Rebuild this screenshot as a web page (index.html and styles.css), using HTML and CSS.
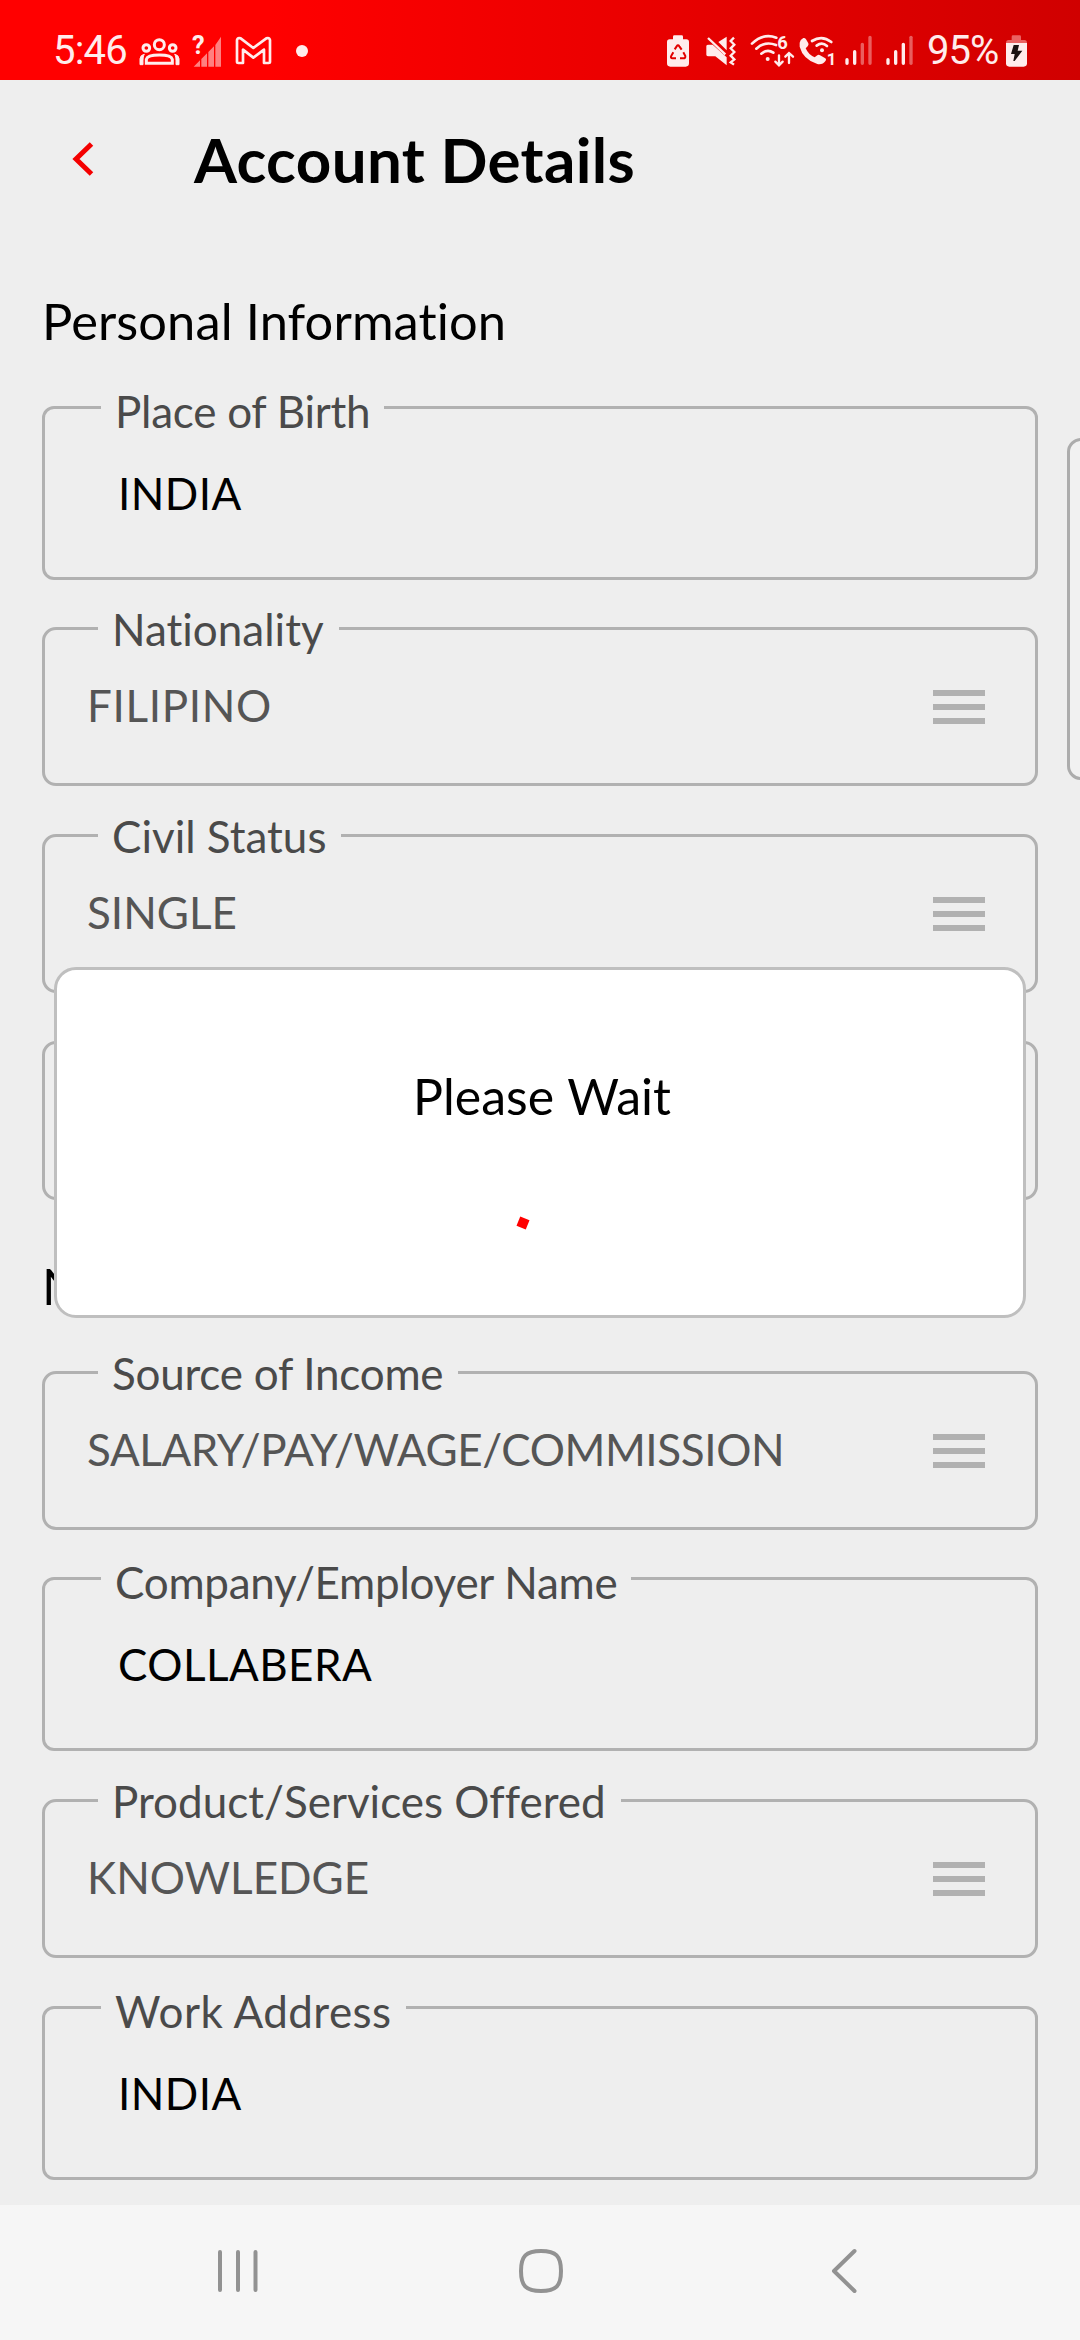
FILE: index.html
```html
<!DOCTYPE html>
<html lang="en">
<head>
<meta charset="utf-8">
<title>Account Details</title>
<link rel="stylesheet" href="styles.css">
</head>
<body>
<div class="screen">
  <header class="status">
    <div class="status-group">
      <span class="time">5:46</span>
      <svg width="60" height="60" viewBox="270 0 180 180" fill="none" stroke="#ffecec" stroke-width="9">
        <circle cx="358" cy="74" r="15"/><circle cx="319" cy="84" r="10"/><circle cx="398" cy="84" r="10"/>
        <path d="M319 130V118Q322 105 358 105T397 118V130Z"/>
        <path d="M300 134V116Q301 105 313 103Q308 109 309 134ZM417 134V116Q416 105 404 103Q409 109 408 134Z" fill="#ffecec" stroke-width="3"/>
      </svg>
      <svg width="40" height="60" viewBox="450 0 120 180">
        <path d="M461 140L480 121V140ZM484 117L501 100V140H484ZM505 96L522 79V140H505ZM526 75L543 50V140H526Z" fill="#ff8080"/>
        <text class="glyph-bold" x="456" y="102" font-size="76">?</text>
      </svg>
      <svg width="50" height="60" viewBox="570 0 150 180" fill="none" stroke="#ffecec" stroke-width="8" stroke-linejoin="round">
        <path d="M591 127V60Q593 52 602 55L640 84L679 55Q688 52 690 60V127Q690 129 686 129H672V89L640 113L609 89V129H595Q591 129 591 127Z"/>
      </svg>
      <svg width="40" height="60" viewBox="720 0 120 180"><circle cx="786" cy="93" r="18" fill="#ffecec"/></svg>
    </div>
    <div class="status-group">
      <svg width="47" height="60" viewBox="0 0 141 180">
        <path d="M69 58V50Q69 46 73 46H95Q99 46 99 50V58H109Q117 58 117 66V130Q117 140 107 140H61Q51 140 51 130V66Q51 58 59 58Z" fill="#ffecec"/>
        <path d="M74 88L80 79Q84 73 88 79L95 89M100 97L106 108Q107 115 100 115H90M78 115H68Q60 114 64 107L70 97" fill="none" stroke="#e20000" stroke-width="6"/>
      </svg>
      <svg width="47" height="60" viewBox="141 0 141 180">
        <path d="M169 78Q169 74 176 74H188L230 112V136L196 109H176Q169 109 169 104ZM205 66L230 50V91Z" fill="#ffecec"/>
        <path d="M174 54L226 103" stroke="#ffecec" stroke-width="7"/>
        <path d="M252 53L242 63L253 74L242 85L253 96L242 107L253 118L242 127L252 134" fill="none" stroke="#ffecec" stroke-width="7"/>
      </svg>
      <svg width="51" height="60" viewBox="282 0 153 180" fill="none" stroke="#ffecec" stroke-width="8" stroke-linecap="round">
        <path d="M306 71Q340 38 379 53M319 86Q345 62 378 75M334 101Q352 86 370 98"/>
        <circle cx="353" cy="117" r="6" fill="#ffecec" stroke="none"/>
        <path d="M387 106V135M376 125L387 136L398 125M417 129V100M406 110L417 99L429 110" stroke-width="7"/>
        <text class="glyph-bold" x="382" y="87" font-size="55" stroke="none">6</text>
      </svg>
      <svg width="44" height="60" viewBox="435 0 132 180" fill="none" stroke="#ffecec" stroke-width="7" stroke-linecap="round">
        <path d="M449 68Q450 59 460 54Q465 53 468 58L475 70Q477 74 473 79L467 85Q475 104 494 112L502 106Q506 103 510 106L526 115Q530 118 527 122Q518 135 502 132Q459 118 449 80Z" fill="#ffecec" stroke="none"/>
        <path d="M486 63Q516 44 544 66M500 77Q516 65 531 78" stroke-width="8"/>
        <circle cx="516" cy="91" r="6" fill="#ffecec" stroke="none"/>
        <text class="glyph-bold" x="530" y="134" font-size="50" stroke="none">1</text>
      </svg>
      <svg width="41" height="60" viewBox="567 0 123 180" stroke="#ffecec" stroke-width="10" stroke-linecap="round">
        <path d="M591 119V130M614 95V130"/><path d="M637 73V130M660 52V130" opacity=".4"/>
      </svg>
      <svg width="40" height="60" viewBox="690 0 120 180" stroke="#ffecec" stroke-width="10" stroke-linecap="round">
        <path d="M714 119V130M737 95V130M760 73V130"/><path d="M783 52V130" opacity=".4"/>
      </svg>
      <span class="battery-level">95%</span>
      <svg width="40" height="60" viewBox="1050 0 120 180">
        <path d="M1068 70Q1068 60 1076 60H1085V50Q1085 46 1089 46H1109Q1113 46 1113 50V60H1123Q1131 60 1131 70Z" fill="#ea6262"/>
        <path d="M1068 69H1131V130Q1131 140 1121 140H1078Q1068 140 1068 130Z" fill="#ffecec"/>
        <path d="M1091 75H1107L1103 92H1117L1094 123H1090L1094 102H1083Z" fill="#1c1010"/>
      </svg>
    </div>
  </header>

  <main class="page">
    <div class="title-bar">
      <svg class="back" width="24" height="36" viewBox="0 0 24 36"><path d="M20.5 3L5 18L20.5 33" fill="none" stroke="#f40000" stroke-width="5"/></svg>
      <h1 class="title">Account Details</h1>
    </div>

    <h2 class="section personal">Personal Information</h2>
    <div class="field input first">
      <div class="label snug">Place of Birth</div>
      <div class="value loose">INDIA</div>
    </div>
    <div class="field select tight">
      <div class="label">Nationality</div>
      <div class="row"><span class="value looser">FILIPINO</span><i class="menu"></i></div>
    </div>
    <div class="field select">
      <div class="label">Civil Status</div>
      <div class="row"><span class="value">SINGLE</span><i class="menu"></i></div>
    </div>
    <div class="field select"></div>

    <h2 class="section next">N</h2>
    <div class="field select flush">
      <div class="label snug">Source of Income</div>
      <div class="row"><span class="value snugger">SALARY/PAY/WAGE/COMMISSION</span><i class="menu"></i></div>
    </div>
    <div class="field input tight">
      <div class="label snug">Company/Employer Name</div>
      <div class="value loose">COLLABERA</div>
    </div>
    <div class="field select">
      <div class="label">Product/Services Offered</div>
      <div class="row"><span class="value">KNOWLEDGE</span><i class="menu"></i></div>
    </div>
    <div class="field input">
      <div class="label loose">Work Address</div>
      <div class="value loose">INDIA</div>
    </div>
  </main>

  <nav class="nav">
    <svg width="42" height="44" viewBox="0 0 42 44" stroke="#929292" stroke-width="4" stroke-linecap="round"><path d="M3 3V41M21 3V41M38.500 3V41"/></svg>
    <svg class="home" width="44" height="44" viewBox="0 0 44 44" fill="none" stroke="#929292" stroke-width="4"><path d="M22 2C37 2 42 7 42 22S37 42 22 42S2 37 2 22S7 2 22 2Z"/></svg>
    <svg width="26" height="46" viewBox="0 0 26 46" fill="none" stroke="#929292" stroke-width="4" stroke-linecap="round" stroke-linejoin="round"><path d="M23.500 3L3 23L23.500 43"/></svg>
  </nav>

  <div class="side-panel"></div>
  <div class="dialog">
    <p class="dialog-text">Please Wait</p>
    <div class="spinner"></div>
  </div>
</div>
</body>
</html>
```

FILE: styles.css
```css
* { box-sizing: border-box; }

body {
  margin: 0;
  background: #eee;
  font-family: Lato, "Open Sans", sans-serif;
  font-variant-ligatures: none;
}

.screen {
  position: relative;
  display: flex;
  flex-direction: column;
  width: 1080px;
  height: 2340px;
  overflow: hidden;
  background: #eee;
}

.status {
  display: flex;
  justify-content: space-between;
  height: 80px;
  padding: 20px 40px 0;
  background: linear-gradient(90deg, #f00 0%, #f00 25%, #d00000 100%);
  color: #ffecec;
  font-family: Roboto, sans-serif;
}

.status-group { display: flex; height: 60px; }
.status svg { display: block; flex: none; }
.glyph-bold { fill: #ffecec; font-family: Roboto, sans-serif; font-weight: 700; }

.time, .battery-level {
  font-size: 40px;
  line-height: 61px;
  white-space: nowrap;
}
.time { width: 90px; padding-left: 13px; letter-spacing: -0.8px; }
.battery-level { width: 80px; padding-left: 7px; letter-spacing: -1px; }

.page {
  display: flex;
  flex-direction: column;
  height: 2125px;
  padding: 0 42px;
}

.title-bar {
  display: flex;
  align-items: center;
  gap: 99px;
  height: 72px;
  margin-top: 43px;
  padding-left: 29px;
}
.title {
  margin: 0;
  font-size: 61.9px;
  font-weight: 700;
  line-height: 72px;
  letter-spacing: 0.35px;
}

.section {
  margin: 0;
  font-size: 50.6px;
  font-weight: 400;
  line-height: 60px;
}
.personal { margin-top: 96px; letter-spacing: 0.1px; }
.next { margin-top: 56px; }

.field {
  display: flex;
  flex-direction: column;
  flex: none;
  margin-top: 48px;
  border: 3px solid #b1b1b1;
  font-size: 44px;
  line-height: 53px;
}
.field.input { height: 174px; border-radius: 12px; }
.field.select { height: 159px; border-radius: 14px; }
.field.first { margin-top: 55px; }
.field.tight { margin-top: 47px; }
.field.flush { margin-top: 55px; }

.label {
  align-self: flex-start;
  background: #eee;
  color: #4a4a4a;
  white-space: nowrap;
}
.input .label { margin: -24px 0 0 56px; padding: 0 14px; }
.select .label { margin: -27px 0 0 53px; padding: 0 15px 0 14px; }

.value { white-space: nowrap; }
.input .value { margin: 29px 0 0 73px; color: #000; }
.select .value { color: #555; }

.snug { letter-spacing: -0.25px; }
.snugger { letter-spacing: -0.4px; }
.loose { letter-spacing: 0.45px; }
.looser { letter-spacing: 0.65px; }

.row {
  display: flex;
  justify-content: space-between;
  margin-top: 23px;
  padding: 0 50px 0 42px;
}

.menu {
  width: 52px;
  height: 34px;
  margin-top: 11px;
  background: repeating-linear-gradient(#b1b1b1 0 6px, transparent 6px 14px);
}

.nav {
  display: flex;
  align-items: center;
  justify-content: space-between;
  height: 135px;
  padding: 0 223px 3px 217px;
  background: #f6f6f6;
}
.home { margin-right: 8px; }

.side-panel {
  position: absolute;
  left: 1067px;
  top: 438px;
  width: 60px;
  height: 342px;
  border: 3px solid #acacac;
  border-radius: 14px;
  background: #f1f1f1;
}

.dialog {
  position: absolute;
  left: 54px;
  top: 967px;
  display: flex;
  flex-direction: column;
  align-items: center;
  width: 972px;
  height: 351px;
  border: 3px solid #bfbfbf;
  border-radius: 22px;
  background: #fff;
}
.dialog-text {
  margin: 96px 0 0 4px;
  font-size: 50px;
  line-height: 60px;
  word-spacing: 1px;
}
.spinner {
  width: 10px;
  height: 10px;
  margin: 92px 35px 0 0;
  background: #f00;
  transform: rotate(22deg);
}
```
